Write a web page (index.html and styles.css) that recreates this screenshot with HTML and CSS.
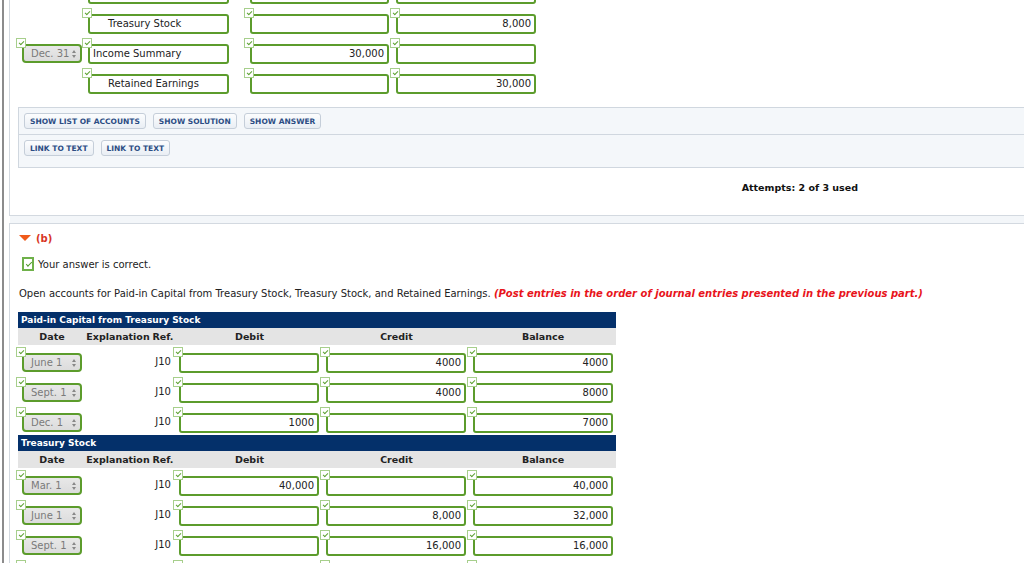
FILE: index.html
```html
<!DOCTYPE html>
<html lang="en">
<head>
    <meta charset="UTF-8">
    <meta name="viewport" content="width=device-width, initial-scale=1.0">
    <title>Treasury Stock - Journal and Ledger</title>
    <link rel="stylesheet" href="styles.css">
</head>
<body>
<div class="page">

    <!-- part (a): journal entries -->
    <div class="panel part-a">
        <div class="journal">
            <div class="jrow">
                <div class="date-slot"></div>
                <div class="field acct"><span class="tick"></span><div class="box"></div></div>
                <div class="field debit"><span class="tick"></span><div class="box num"></div></div>
                <div class="field credit"><span class="tick"></span><div class="box num"></div></div>
            </div>
            <div class="jrow">
                <div class="date-slot"></div>
                <div class="field acct"><span class="tick"></span><div class="box indent">Treasury Stock</div></div>
                <div class="field debit"><span class="tick"></span><div class="box num"></div></div>
                <div class="field credit"><span class="tick"></span><div class="box num">8,000</div></div>
            </div>
            <div class="jrow">
                <div class="date-slot">
                    <div class="field"><span class="tick"></span><div class="select">Dec. 31<span class="arrows"></span></div></div>
                </div>
                <div class="field acct"><span class="tick"></span><div class="box">Income Summary</div></div>
                <div class="field debit"><span class="tick"></span><div class="box num">30,000</div></div>
                <div class="field credit"><span class="tick"></span><div class="box num"></div></div>
            </div>
            <div class="jrow">
                <div class="date-slot"></div>
                <div class="field acct"><span class="tick"></span><div class="box indent">Retained Earnings</div></div>
                <div class="field debit"><span class="tick"></span><div class="box num"></div></div>
                <div class="field credit"><span class="tick"></span><div class="box num">30,000</div></div>
            </div>
        </div>

        <div class="toolbar">
            <div class="toolbar-row">
                <button class="btn">Show List of Accounts</button>
                <button class="btn">Show Solution</button>
                <button class="btn">Show Answer</button>
            </div>
            <div class="toolbar-row last">
                <button class="btn">Link to Text</button>
                <button class="btn">Link to Text</button>
            </div>
        </div>

        <div class="attempts">Attempts: 2 of 3 used</div>
    </div>

    <div class="divider"></div>

    <!-- part (b): ledger accounts -->
    <div class="panel part-b">
        <div class="part-title"><span class="caret"></span>(b)</div>

        <div class="correct"><span class="big-tick"></span>Your answer is correct.</div>

        <p class="instructions">Open accounts for Paid-in Capital from Treasury Stock, Treasury Stock, and Retained Earnings. <em>(Post entries in the order of journal entries presented in the previous part.)</em></p>

        <div class="ledger">
            <div class="ledger-title">Paid-in Capital from Treasury Stock</div>
            <div class="lrow head">
                <div>Date</div><div>Explanation</div><div>Ref.</div><div>Debit</div><div>Credit</div><div>Balance</div>
            </div>
            <div class="lrow">
                <div class="field date"><span class="tick"></span><div class="select">June 1<span class="arrows"></span></div></div>
                <div></div>
                <div class="ref">J10</div>
                <div class="field amt"><span class="tick"></span><div class="box num"></div></div>
                <div class="field amt"><span class="tick"></span><div class="box num">4000</div></div>
                <div class="field amt"><span class="tick"></span><div class="box num">4000</div></div>
            </div>
            <div class="lrow">
                <div class="field date"><span class="tick"></span><div class="select">Sept. 1<span class="arrows"></span></div></div>
                <div></div>
                <div class="ref">J10</div>
                <div class="field amt"><span class="tick"></span><div class="box num"></div></div>
                <div class="field amt"><span class="tick"></span><div class="box num">4000</div></div>
                <div class="field amt"><span class="tick"></span><div class="box num">8000</div></div>
            </div>
            <div class="lrow">
                <div class="field date"><span class="tick"></span><div class="select">Dec. 1<span class="arrows"></span></div></div>
                <div></div>
                <div class="ref">J10</div>
                <div class="field amt"><span class="tick"></span><div class="box num">1000</div></div>
                <div class="field amt"><span class="tick"></span><div class="box num"></div></div>
                <div class="field amt"><span class="tick"></span><div class="box num">7000</div></div>
            </div>
        </div>

        <div class="ledger">
            <div class="ledger-title">Treasury Stock</div>
            <div class="lrow head">
                <div>Date</div><div>Explanation</div><div>Ref.</div><div>Debit</div><div>Credit</div><div>Balance</div>
            </div>
            <div class="lrow">
                <div class="field date"><span class="tick"></span><div class="select">Mar. 1<span class="arrows"></span></div></div>
                <div></div>
                <div class="ref">J10</div>
                <div class="field amt"><span class="tick"></span><div class="box num">40,000</div></div>
                <div class="field amt"><span class="tick"></span><div class="box num"></div></div>
                <div class="field amt"><span class="tick"></span><div class="box num">40,000</div></div>
            </div>
            <div class="lrow">
                <div class="field date"><span class="tick"></span><div class="select">June 1<span class="arrows"></span></div></div>
                <div></div>
                <div class="ref">J10</div>
                <div class="field amt"><span class="tick"></span><div class="box num"></div></div>
                <div class="field amt"><span class="tick"></span><div class="box num">8,000</div></div>
                <div class="field amt"><span class="tick"></span><div class="box num">32,000</div></div>
            </div>
            <div class="lrow">
                <div class="field date"><span class="tick"></span><div class="select">Sept. 1<span class="arrows"></span></div></div>
                <div></div>
                <div class="ref">J10</div>
                <div class="field amt"><span class="tick"></span><div class="box num"></div></div>
                <div class="field amt"><span class="tick"></span><div class="box num">16,000</div></div>
                <div class="field amt"><span class="tick"></span><div class="box num">16,000</div></div>
            </div>
            <div class="lrow">
                <div class="field date"><span class="tick"></span><div class="select"><span></span><span class="arrows"></span></div></div>
                <div></div>
                <div></div>
                <div class="field amt"><span class="tick"></span><div class="box num"></div></div>
                <div class="field amt"><span class="tick"></span><div class="box num"></div></div>
                <div class="field amt"><span class="tick"></span><div class="box num"></div></div>
            </div>
        </div>
    </div>
</div>
</body>
</html>
```

FILE: styles.css
```css
body {
    margin: 0;
    background: #fff;
    font-family: "DejaVu Sans", Verdana, sans-serif;
    font-size: 10px;
    color: #222;
    overflow: hidden;
}
.page {
    margin-left: 2px;
    border-left: 2px solid #8c8c8c;
    padding-left: 5px;
    min-height: 563px;
}
.panel {
    border-left: 1px solid #d3d9e0;
    background: #fff;
}
.part-a {
    border-bottom: 1px solid #d3d9e0;
}
.divider {
    height: 7px;
    background: #f3f6f9;
    margin-left: 1px;
}
.part-b {
    border-top: 1px solid #d3d9e0;
    padding-left: 9px;
}

/* inputs with their small green tick */
.field {
    position: relative;
    padding: 6px 0 0 6px;
}
.tick {
    position: absolute;
    left: 0;
    top: 0;
    width: 10px;
    height: 10px;
    box-sizing: border-box;
    border: 1px solid #a7cf8c;
    background: #fff;
    z-index: 1;
}
.tick::after {
    content: "";
    position: absolute;
    left: 2px;
    top: 2px;
    width: 4px;
    height: 2px;
    border-left: 1px solid #5fa334;
    border-bottom: 1px solid #5fa334;
    transform: rotate(-45deg);
}
.box {
    height: 20px;
    box-sizing: border-box;
    border: 2px solid #5c9c2c;
    border-radius: 3px;
    background: #fff;
    line-height: 16px;
    padding: 0 3px;
    white-space: nowrap;
    overflow: hidden;
}
.box.indent {
    padding-left: 18px;
}
.box.num {
    text-align: right;
}
.select {
    width: 60px;
    height: 19px;
    box-sizing: border-box;
    border: 2px solid #5c9c2c;
    border-radius: 4px;
    background: linear-gradient(#e8e8e8, #dcdcdc);
    color: #7a7a7a;
    line-height: 15px;
    padding: 0 4px 0 7px;
    display: flex;
    justify-content: space-between;
    align-items: center;
}
.arrows {
    display: flex;
    flex-direction: column;
    gap: 2px;
}
.arrows::before,
.arrows::after {
    content: "";
    border-left: 2.5px solid transparent;
    border-right: 2.5px solid transparent;
}
.arrows::before {
    border-bottom: 3px solid #888;
}
.arrows::after {
    border-top: 3px solid #888;
}

/* journal */
.journal {
    margin-top: -24px;
    padding-left: 6px;
}
.jrow {
    display: flex;
    padding: 2px 0;
    height: 26px;
}
.date-slot {
    width: 66px;
}
.acct {
    width: 141px;
}
.debit {
    width: 139px;
    margin-left: 15px;
}
.credit {
    width: 140px;
    margin-left: 1px;
}

/* buttons */
.toolbar {
    margin: 11px 0 0 8px;
    background: #f4f7fa;
    border: 1px solid #d0d7df;
    border-right: 0;
}
.toolbar-row {
    display: flex;
    gap: 7px;
    padding: 5px 5px 5px;
    border-bottom: 1px solid #d0d7df;
}
.toolbar-row.last {
    border-bottom: 0;
    padding-bottom: 11px;
}
.btn {
    height: 16px;
    padding: 0 5px;
    font-family: "DejaVu Sans", Verdana, sans-serif;
    font-size: 7.5px;
    font-weight: bold;
    text-transform: uppercase;
    color: #2c4d84;
    background: linear-gradient(#fcfdfe, #e9eef4);
    border: 1px solid #c5ced9;
    border-radius: 3px;
}
.attempts {
    text-align: right;
    padding: 13px 166px 20px 0;
    font-weight: bold;
    font-size: 9.5px;
    line-height: 14px;
    color: #111;
}

/* part b */
.part-title {
    display: flex;
    align-items: center;
    gap: 5px;
    margin-top: 7px;
    height: 14px;
    color: #d8361f;
    font-weight: bold;
}
.caret {
    border-left: 6px solid transparent;
    border-right: 6px solid transparent;
    border-top: 6px solid #f05a1a;
}
.correct {
    display: flex;
    align-items: center;
    gap: 4px;
    margin: 12px 0 0 3px;
    height: 14px;
}
.big-tick {
    position: relative;
    width: 12px;
    height: 14px;
    box-sizing: border-box;
    border: 2px solid #6fb14a;
    background: #fff;
}
.big-tick::after {
    content: "";
    position: absolute;
    left: 2px;
    top: 3px;
    width: 5px;
    height: 2px;
    border-left: 1.5px solid #4f9a2a;
    border-bottom: 1.5px solid #4f9a2a;
    transform: rotate(-45deg);
}
.instructions {
    margin: 17px 0 12px;
    line-height: 12px;
}
.instructions em {
    color: #e8141b;
    font-weight: bold;
}

/* ledger accounts */
.ledger {
    margin-left: -1px;
    width: 598px;
}
.ledger-title {
    background: #04306a;
    color: #fff;
    font-weight: bold;
    font-size: 9px;
    height: 16px;
    line-height: 16px;
    padding-left: 3px;
}
.lrow {
    display: grid;
    grid-template-columns: 68px 64px 26px 147px 147px 146px;
    height: 26px;
    padding: 2px 0;
}
.lrow.head {
    height: 17px;
    padding: 0;
    background: #e4e4e4;
    font-weight: bold;
    font-size: 9.5px;
    line-height: 17px;
    text-align: center;
}
.lrow .date {
    margin-left: -2px;
}
.lrow .amt {
    margin-left: -3px;
    width: 140px;
}
.ref {
    text-align: right;
    padding: 9px 5px 0 0;
    line-height: 12px;
}
```
